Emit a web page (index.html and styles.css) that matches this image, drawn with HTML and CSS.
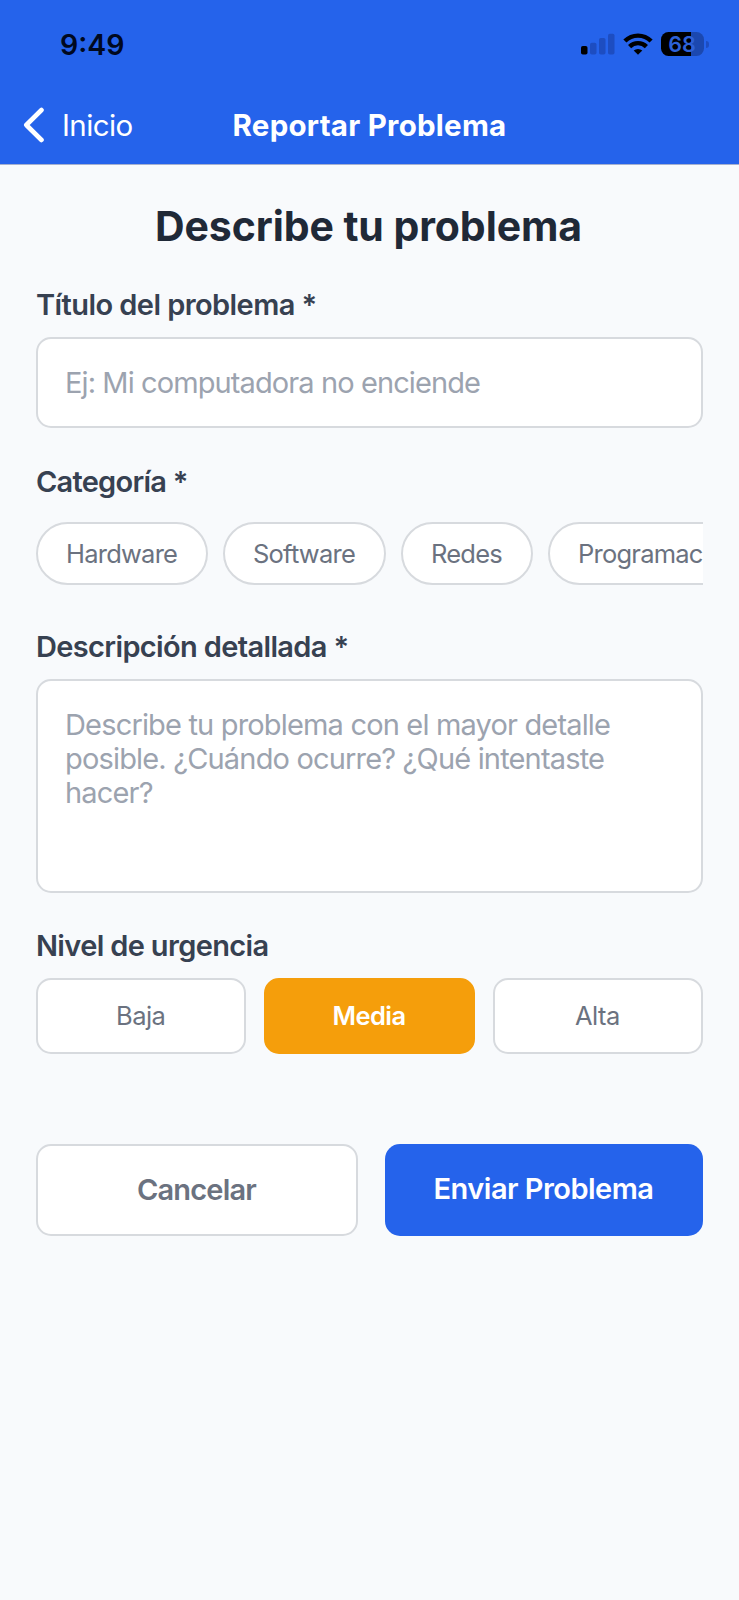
FILE: index.html
```html
<!DOCTYPE html>
<html lang="es">
<head>
<meta charset="utf-8">
<title>Reportar Problema</title>
<link rel="stylesheet" href="styles.css">
</head>
<body>
<header class="header">
  <div class="status">
    <span class="time">9:49</span>
    <div class="indicators">
      <svg class="signal" width="34" height="22" viewBox="0 0 34 22">
        <rect x="0" y="13" width="6.5" height="8.5" rx="1.8" fill="#000"/>
        <g fill="#1d4dc1">
          <rect x="9" y="9.7" width="6.5" height="11.8" rx="1.8"/>
          <rect x="18" y="5" width="6.5" height="16.5" rx="1.8"/>
          <rect x="27" y="0.7" width="6.5" height="20.8" rx="1.8"/>
        </g>
      </svg>
      <svg class="wifi" width="30" height="22" viewBox="0 0 30 22">
        <g fill="none" stroke="#000" stroke-width="4.4">
          <path d="M1.9 8 A18.6 18.6 0 0 1 28.1 8"/>
          <path d="M6.6 13.6 A11.8 11.8 0 0 1 23.4 13.6"/>
        </g>
        <path d="M15 21.8 L10.7 17.6 A6.4 6.4 0 0 1 19.3 17.6 Z" fill="#000"/>
      </svg>
      <div class="battery"><span class="level">68</span></div>
      <span class="nub"></span>
    </div>
  </div>
  <nav class="nav">
    <a class="back">
      <svg class="chevron" width="22" height="36" viewBox="0 0 22 36"><path d="M18.5 3 L3.3 18 L18.5 33" fill="none" stroke="#fff" stroke-width="4.6" stroke-linecap="round" stroke-linejoin="round"/></svg>
      <span>Inicio</span>
    </a>
    <h1 class="nav-title">Reportar Problema</h1>
  </nav>
</header>
<main class="form">
  <h2 class="title">Describe tu problema</h2>
  <label class="label label-title" for="titulo">Título del problema *</label>
  <input class="field" id="titulo" type="text" placeholder="Ej: Mi computadora no enciende">
  <span class="label label-category">Categoría *</span>
  <div class="chips">
    <button class="chip chip-hardware">Hardware</button>
    <button class="chip chip-software">Software</button>
    <button class="chip chip-redes">Redes</button>
    <button class="chip">Programación</button>
  </div>
  <label class="label label-description" for="descripcion">Descripción detallada *</label>
  <textarea class="field area" id="descripcion" placeholder="Describe tu problema con el mayor detalle posible. ¿Cuándo ocurre? ¿Qué intentaste hacer?"></textarea>
  <span class="label label-urgency">Nivel de urgencia</span>
  <div class="levels">
    <button class="option">Baja</button>
    <button class="option option-active">Media</button>
    <button class="option">Alta</button>
  </div>
  <div class="actions">
    <button class="action cancel">Cancelar</button>
    <button class="action submit">Enviar Problema</button>
  </div>
</main>
</body>
</html>
```

FILE: styles.css
```css
* { box-sizing: border-box; }

body {
  margin: 0;
  min-height: 1600px;
  background: #f8fafc;
  font-family: Inter, "Liberation Sans", sans-serif;
}

button, input, textarea { font-family: inherit; margin: 0; }

.header {
  height: 165px;
  background: #2563eb;
  border-bottom: 1px solid #a5b0cf;
}

.status {
  display: flex;
  justify-content: space-between;
  align-items: flex-start;
  height: 86px;
  padding: 30px 30px 0 60px;
}

.time {
  font-size: 28.5px;
  line-height: 30px;
  font-weight: 600;
  color: #00091f;
}

.indicators {
  display: flex;
  align-items: center;
  height: 24px;
  margin-top: 2px;
}

.signal { margin-right: 8px; }
.wifi { margin-right: 8px; }

.battery {
  width: 43px;
  height: 24px;
  border-radius: 7.5px;
  background: linear-gradient(to right, #000 30px, #1b48b0 30px);
  text-align: center;
}

.level {
  display: block;
  padding-right: 1px;
  font-size: 21.5px;
  line-height: 25px;
  font-weight: 600;
  color: #2d62d8;
}

.nub {
  width: 3px;
  height: 7px;
  margin-left: 2px;
  border-radius: 0 3px 3px 0;
  background: #1d4dc1;
}

.nav {
  display: grid;
  grid-template-columns: 1fr auto 1fr;
  align-items: center;
  height: 78px;
  color: #fff;
  font-size: 29.5px;
  line-height: 36px;
}

.back {
  display: flex;
  align-items: center;
  gap: 17px;
  padding-left: 23px;
  letter-spacing: -0.6px;
}

.nav-title {
  margin: 0;
  font-size: inherit;
  font-weight: 700;
  letter-spacing: 0.25px;
}

.form {
  display: flex;
  flex-direction: column;
  padding: 36px 36px 0;
}

.title {
  margin: 0 0 36px;
  padding-right: 2px;
  text-align: center;
  font-size: 41px;
  line-height: 50px;
  font-weight: 700;
  letter-spacing: -0.08px;
  color: #1f2937;
}

.label {
  margin-bottom: 14px;
  font-size: 29px;
  line-height: 36px;
  font-weight: 600;
  letter-spacing: -0.65px;
  color: #374151;
}

.label-title { letter-spacing: -0.57px; }
.label-category { margin: 36px 0 22px; letter-spacing: -0.75px; }
.label-description { margin-top: 44px; }
.label-urgency { margin-top: 35px; }

.field {
  width: 100%;
  height: 91px;
  padding: 0 27px 1px;
  border: 2px solid #d7dade;
  border-radius: 15px;
  outline: none;
  background: #fff;
  font-size: 29px;
  letter-spacing: -0.9px;
  color: #374151;
}

.field::placeholder { color: #9ca3af; opacity: 1; }

.area {
  display: block;
  height: 214px;
  padding: 27px;
  line-height: 34px;
  letter-spacing: -0.83px;
  resize: none;
}

.chips {
  display: flex;
  gap: 15px;
  overflow: hidden;
}

.chip {
  flex: none;
  height: 63px;
  padding: 0 29px 0 28px;
  border: 2px solid #d7dade;
  border-radius: 32px;
  background: #fff;
  font-size: 25.5px;
  letter-spacing: -0.77px;
  text-align: left;
  color: #6b7280;
}

.chip-hardware { width: 172px; }
.chip-software { width: 163px; }
.chip-redes { width: 132px; }

.levels {
  display: grid;
  grid-template-columns: repeat(3, 1fr);
  gap: 18px;
}

.option {
  height: 76px;
  padding: 0 1px 1px 0;
  border: 2px solid #d7dade;
  border-radius: 15px;
  background: #fff;
  font-size: 25.5px;
  letter-spacing: -0.55px;
  color: #6b7280;
}

.option-active {
  border-color: #f59e0b;
  background: #f59e0b;
  font-weight: 600;
  color: #fff;
}

.actions {
  display: grid;
  grid-template-columns: 322px 1fr;
  gap: 27px;
  margin-top: 90px;
}

.action {
  height: 92px;
  padding: 0;
  border: 0;
  border-radius: 15px;
  font-size: 29px;
  font-weight: 600;
}

.cancel {
  padding: 0 1px 2px 0;
  border: 2px solid #d7dade;
  background: #fff;
  letter-spacing: -0.8px;
  color: #6b7280;
}

.submit {
  padding: 0 1px 4px 0;
  background: #2563eb;
  letter-spacing: -0.53px;
  color: #fff;
}
```
